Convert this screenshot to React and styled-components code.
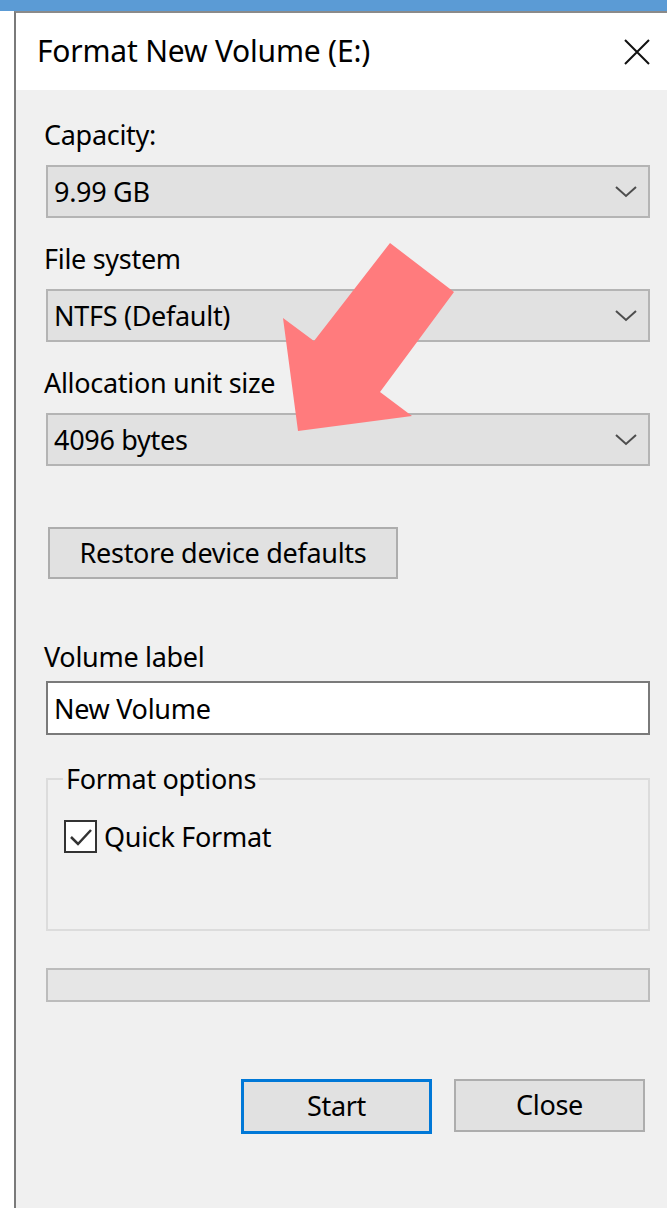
import React from 'react';
import styled, { createGlobalStyle } from 'styled-components';

const GlobalStyle = createGlobalStyle`
  html, body {
    margin: 0;
    padding: 0;
    background: #ffffff;
  }
  body {
    font-family: "Segoe UI", "Noto Sans", "Open Sans", sans-serif;
    color: #000;
  }
`;

const Page = styled.div`
  position: relative;
  width: 667px;
  height: 1208px;
  overflow: hidden;
  display: flex;
  flex-direction: column;
`;

const DesktopBand = styled.div`
  height: 11px;
  background: #5b9bd5;
  flex: none;
`;

const Stage = styled.div`
  flex: 1;
  display: flex;
  padding-left: 14px;
  background: #ffffff;
`;

const Window = styled.div`
  flex: 1;
  display: flex;
  flex-direction: column;
  border-left: 2px solid #7a7a7a;
  border-top: 2px solid #8a8a8a;
`;

const TitleBar = styled.div`
  height: 77px;
  flex: none;
  background: #ffffff;
  display: flex;
  align-items: center;
  justify-content: space-between;
  padding: 0 16px 0 21px;
`;

const Title = styled.div`
  font-size: 30px;
  letter-spacing: -0.2px;
  padding-bottom: 2px;
`;

const CloseGlyph = styled.svg`
  width: 28px;
  height: 28px;
  display: block;
`;

const Body = styled.div`
  flex: 1;
  background: #f0f0f0;
  padding: 27px 17px 0 30px;
  display: flex;
  flex-direction: column;
`;

const Label = styled.div`
  font-size: 27px;
  letter-spacing: -0.3px;
  line-height: 36px;
  height: 36px;
  margin-left: -2px;
  margin-top: ${p => p.$top || 0}px;
`;

const Select = styled.div`
  margin-top: 12px;
  height: 53px;
  box-sizing: border-box;
  background: #e1e1e1;
  border: 2px solid #b4b4b4;
  display: flex;
  align-items: center;
  justify-content: space-between;
  padding: 0 10px 0 6px;
  font-size: 27px;
  letter-spacing: -0.3px;
`;

const Chevron = styled.svg`
  width: 24px;
  height: 14px;
  display: block;
`;

const PushButton = styled.div`
  box-sizing: border-box;
  height: ${p => p.$h || 53}px;
  width: ${p => p.$w}px;
  background: #e1e1e1;
  border: ${p => (p.$focused ? '3px solid #0078d7' : '2px solid #adadad')};
  display: flex;
  align-items: center;
  justify-content: center;
  font-size: 27px;
  letter-spacing: -0.3px;
  padding-bottom: 2px;
`;

const RestoreRow = styled.div`
  margin-top: 61px;
  padding-left: 2px;
  display: flex;
`;

const TextInput = styled.div`
  margin-top: 6px;
  height: 54px;
  box-sizing: border-box;
  background: #ffffff;
  border: 2px solid #7a7a7a;
  display: flex;
  align-items: center;
  padding: 0 6px;
  font-size: 27px;
  letter-spacing: -0.3px;
`;

const GroupBox = styled.fieldset`
  margin: 26px 0 0;
  height: 170px;
  box-sizing: border-box;
  border: 2px solid #dcdcdc;
  padding: 21px 16px 0 16px;
  min-width: 0;
`;

const Legend = styled.legend`
  font-size: 27px;
  letter-spacing: -0.3px;
  padding: 0 3px;
  margin-left: -1px;
  line-height: 36px;
`;

const CheckRow = styled.label`
  display: flex;
  align-items: center;
  gap: 7px;
  font-size: 27px;
  letter-spacing: -0.3px;
`;

const CheckBox = styled.span`
  width: 33px;
  height: 33px;
  box-sizing: border-box;
  border: 2px solid #333333;
  background: #ffffff;
  display: flex;
  align-items: center;
  justify-content: center;
`;

const Progress = styled.div`
  margin-top: 37px;
  height: 34px;
  box-sizing: border-box;
  background: #e6e6e6;
  border: 2px solid #bcbcbc;
`;

const ActionRow = styled.div`
  margin-top: 77px;
  display: flex;
  justify-content: flex-end;
  gap: 22px;
  padding-right: 5px;
`;

const Pointer = styled.svg`
  position: absolute;
  left: 0;
  top: 0;
  pointer-events: none;
`;

const Dropdown = ({ value }) => (
  <Select>
    <span>{value}</span>
    <Chevron viewBox="0 0 24 14">
      <path d="M2 2 L12 11 L22 2" fill="none" stroke="#4d4d4d" strokeWidth="2" />
    </Chevron>
  </Select>
);

export default function App() {
  return (
    <>
      <GlobalStyle />
      <Page>
        <DesktopBand />
        <Stage>
          <Window>
            <TitleBar>
              <Title>Format New Volume (E:)</Title>
              <CloseGlyph viewBox="0 0 28 28">
                <path d="M2 2 L26 26 M26 2 L2 26" stroke="#111" strokeWidth="2" fill="none" />
              </CloseGlyph>
            </TitleBar>
            <Body>
              <Label>Capacity:</Label>
              <Dropdown value="9.99 GB" />
              <Label $top={23}>File system</Label>
              <Dropdown value="NTFS (Default)" />
              <Label $top={23}>Allocation unit size</Label>
              <Dropdown value="4096 bytes" />

              <RestoreRow>
                <PushButton $w={350} $h={52}>Restore device defaults</PushButton>
              </RestoreRow>

              <Label $top={60}>Volume label</Label>
              <TextInput>New Volume</TextInput>

              <GroupBox>
                <Legend>Format options</Legend>
                <CheckRow>
                  <CheckBox>
                    <svg width="24" height="20" viewBox="0 0 24 20">
                      <path d="M2 10 L9 17 L22 3" fill="none" stroke="#333" strokeWidth="2.5" />
                    </svg>
                  </CheckBox>
                  Quick Format
                </CheckRow>
              </GroupBox>

              <Progress />

              <ActionRow>
                <PushButton $w={191} $h={55} $focused>Start</PushButton>
                <PushButton $w={191} $h={53}>Close</PushButton>
              </ActionRow>
            </Body>
          </Window>
        </Stage>
        <Pointer width="667" height="1208" viewBox="0 0 667 1208">
          <polygon
            points="390,243 454,292 380,392 412,416 298,431 283,318 314,341"
            fill="#ff7b7d"
          />
        </Pointer>
      </Page>
    </>
  );
}
